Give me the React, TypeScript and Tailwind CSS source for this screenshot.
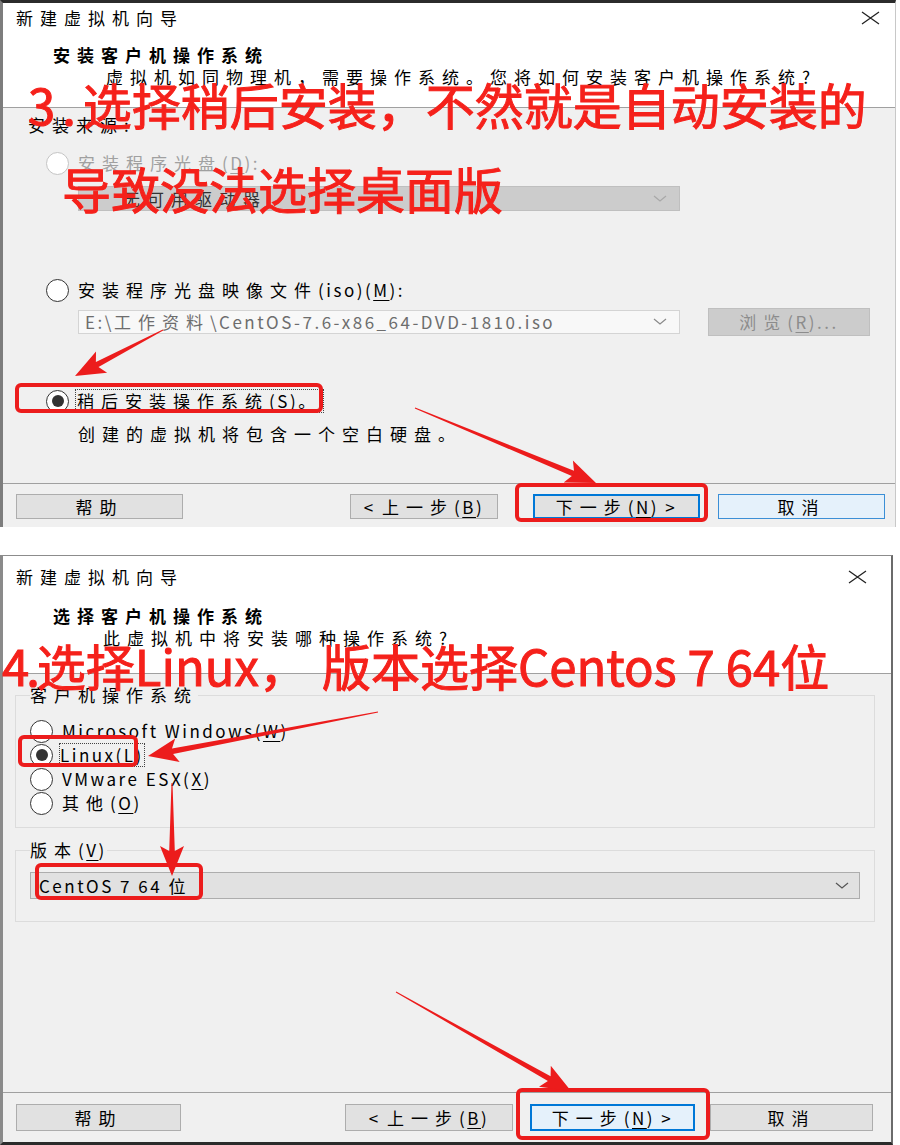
import React from "react";

// CJK runs get wide tracking, latin runs a little, so the stretched screenshot widths line up
const CJK = /([\u2e80-\u9fff\u3000-\u303f\uff00-\uffef]+)/;

function Runs({ s }: { s: string }) {
  return (
    <>
      {s
        .split(CJK)
        .filter(Boolean)
        .map((r, i) =>
          CJK.test(r) ? (
            <span key={i} className="tracking-[7px]">
              {r}
            </span>
          ) : (
            <span key={i} className="tracking-[2.5px]">
              {r}
            </span>
          )
        )}
    </>
  );
}

// "&X" marks an underlined mnemonic letter
function T({ s, className = "" }: { s: string; className?: string }) {
  return (
    <span className={`whitespace-nowrap ${className}`}>
      {s
        .split(/(&.)/)
        .filter(Boolean)
        .map((p, i) =>
          p.length === 2 && p[0] === "&" ? (
            <u key={i} className="tracking-[2.5px] underline-offset-[3px]">
              {p[1]}
            </u>
          ) : (
            <Runs key={i} s={p} />
          )
        )}
    </span>
  );
}

function Radio({ on = false, off = false }: { on?: boolean; off?: boolean }) {
  return (
    <span
      className={`flex h-[23px] w-[23px] shrink-0 items-center justify-center rounded-full border-[1.5px] bg-white ${
        off ? "border-[#c4c4c4]" : "border-[#333333]"
      }`}
    >
      {on && <span className="h-[12px] w-[12px] rounded-full bg-[#333333]" />}
    </span>
  );
}

function Chevron({ color = "#8a8a8a" }: { color?: string }) {
  return (
    <svg width="14" height="8" viewBox="0 0 14 8">
      <polyline points="1,1 7,6 13,1" fill="none" stroke={color} strokeWidth="1.2" />
    </svg>
  );
}

function CloseX() {
  return (
    <svg width="19" height="14" viewBox="0 0 19 14">
      <path d="M1 1L18 13M18 1L1 13" stroke="#222" strokeWidth="1.3" fill="none" />
    </svg>
  );
}

function Btn({ s, className }: { s: string; className: string }) {
  return (
    <div className={`flex shrink-0 items-center justify-center ${className}`}>
      <T s={s} />
    </div>
  );
}

function arrow(x1: number, y1: number, x2: number, y2: number) {
  const dx = x2 - x1;
  const dy = y2 - y1;
  const L = Math.hypot(dx, dy);
  const ux = dx / L;
  const uy = dy / L;
  const nx = -uy;
  const ny = ux;
  const hl = 30;
  const hw = 12;
  const sw = 2.8;
  const tw = 0.5;
  const bx = x2 - ux * hl;
  const by = y2 - uy * hl;
  const p = (x: number, y: number) => `${x.toFixed(1)},${y.toFixed(1)}`;
  return [
    p(x1 + nx * tw, y1 + ny * tw),
    p(bx + nx * sw + ux * 5, by + ny * sw + uy * 5),
    p(bx + nx * hw, by + ny * hw),
    p(x2, y2),
    p(bx - nx * hw, by - ny * hw),
    p(bx - nx * sw + ux * 5, by - ny * sw + uy * 5),
    p(x1 - nx * tw, y1 - ny * tw),
  ].join(" ");
}

const arrows = [
  [163, 330, 75, 376],
  [415, 408, 596, 483],
  [378, 712, 148, 756],
  [172, 783, 172, 876],
  [396, 992, 571, 1091],
];

const boxes = [
  [17, 385, 304, 26],
  [517, 485, 189, 35],
  [20, 737, 116, 28],
  [37, 865, 164, 33],
  [518, 1090, 190, 48],
];

export default function App() {
  return (
    <div className="relative h-[1145px] w-[900px] overflow-hidden bg-white font-['Noto_Sans_CJK_SC',sans-serif] text-[17px] text-black">
      {/* Dialog 1 */}
      <div className="flex h-[527px] w-[896px] flex-col border-t-[3px] border-r border-l-[3px] border-t-[#2b2b2b] border-r-[#c8c8c8] border-l-[#7d7d7d]">
        <div className="h-[105px] shrink-0 border-b border-[#a0a0a0] bg-white">
          <div className="flex items-center justify-between pt-[3px] pr-[15px] pl-[13px] leading-[24px]">
            <T s="新建虚拟机向导" />
            <CloseX />
          </div>
          <div className="mt-[14px] pl-[50px] leading-[22px] font-bold">
            <T s="安装客户机操作系统" />
          </div>
          <div className="pl-[103px] leading-[22px]">
            <T s="虚拟机如同物理机，需要操作系统。您将如何安装客户机操作系统?" />
          </div>
        </div>

        <div className="flex-1 bg-[#f0f0f0] pt-[6px] leading-[22px]">
          <div className="pl-[25px]">
            <T s="安装来源:" />
          </div>
          <div className="mt-[15px] flex h-[24px] items-center gap-[9px] pl-[43px] text-[#a0a0a0]">
            <Radio off />
            <T s="安装程序光盘(&D):" />
          </div>
          <div className="mt-[11px] ml-[75px] flex h-[25px] w-[602px] items-center justify-between border border-[#bfbfbf] bg-[#cccccc] pr-[12px] pl-[44px] text-[#333333]">
            <T s="无可用驱动器" />
            <Chevron color="#a8a8a8" />
          </div>
          <div className="mt-[67px] flex h-[24px] items-center gap-[9px] pl-[43px]">
            <Radio />
            <T s="安装程序光盘映像文件(iso)(&M):" />
          </div>
          <div className="mt-[6px] flex h-[28px] items-center">
            <div className="ml-[75px] flex h-[24px] w-[602px] items-center justify-between border border-[#d4d4d4] bg-[#f8f8f8] pr-[12px] pl-[6px] text-[#6d6d6d]">
              <T s="E:\工作资料\CentOS-7.6-x86_64-DVD-1810.iso" />
              <Chevron />
            </div>
            <Btn
              s="浏览(&R)..."
              className="ml-[28px] h-[28px] w-[162px] border border-[#bfbfbf] bg-[#cccccc] text-[#8c8c8c]"
            />
          </div>
          <div className="mt-[53px] flex h-[24px] items-center gap-[7px] pl-[43px]">
            <Radio on />
            <T s="稍后安装操作系统(&S)。" className="px-[1px] outline outline-dotted outline-[#444444]" />
          </div>
          <div className="mt-[10px] pl-[75px]">
            <T s="创建的虚拟机将包含一个空白硬盘。" />
          </div>
        </div>

        <div className="flex h-[44px] shrink-0 border-t border-[#a0a0a0] bg-[#f0f0f0] pt-[10px]">
          <Btn s="帮助" className="ml-[13px] h-[25px] w-[167px] border border-[#adadad] bg-[#e1e1e1]" />
          <Btn s="< 上一步(&B)" className="ml-[167px] h-[25px] w-[148px] border border-[#adadad] bg-[#e1e1e1]" />
          <Btn s="下一步(&N) >" className="ml-[35px] h-[25px] w-[167px] border-2 border-[#0078d7] bg-[#e1e1e1]" />
          <Btn s="取消" className="ml-[18px] h-[25px] w-[167px] border border-[#3c8fd6] bg-[#e5f1fb]" />
        </div>
      </div>

      {/* Dialog 2 */}
      <div className="mt-[28px] flex h-[590px] w-[893px] flex-col border-t border-r-2 border-b-[3px] border-l-[3px] border-t-[#8c8c8c] border-r-[#6b6b6b] border-b-[#2b2b2b] border-l-[#8a8a8a]">
        <div className="h-[118px] shrink-0 border-b border-[#a0a0a0] bg-white">
          <div className="flex items-center justify-between pt-[9px] pr-[24px] pl-[13px] leading-[24px]">
            <T s="新建虚拟机向导" />
            <CloseX />
          </div>
          <div className="mt-[16px] pl-[50px] leading-[22px] font-bold">
            <T s="选择客户机操作系统" />
          </div>
          <div className="pl-[100px] leading-[22px]">
            <T s="此虚拟机中将安装哪种操作系统?" />
          </div>
        </div>

        <div className="flex-1 bg-[#f0f0f0] leading-[22px]">
          <fieldset className="mt-[10px] ml-[12px] w-[860px] border border-[#dcdcdc] pt-[13px] pb-[12px] pl-[14px]">
            <legend className="leading-[22px]">
              <T s="客户机操作系统" />
            </legend>
            <div className="flex h-[24px] items-center gap-[9px]">
              <Radio />
              <T s="Microsoft Windows(&W)" />
            </div>
            <div className="flex h-[24px] items-center gap-[7px]">
              <Radio on />
              <T s="Linux(&L)" className="outline outline-dotted outline-[#444444]" />
            </div>
            <div className="flex h-[24px] items-center gap-[9px]">
              <Radio />
              <T s="VMware ESX(&X)" />
            </div>
            <div className="flex h-[24px] items-center gap-[9px]">
              <Radio />
              <T s="其他(&O)" />
            </div>
          </fieldset>

          <fieldset className="mt-[11px] ml-[12px] w-[860px] border border-[#dcdcdc] pt-[11px] pb-[22px] pl-[14px]">
            <legend className="leading-[22px]">
              <T s="版本(&V)" />
            </legend>
            <div className="flex h-[27px] w-[830px] items-center justify-between border border-[#adadad] bg-[#e1e1e1] pr-[10px] pl-[8px]">
              <T s="CentOS 7 64 位" />
              <Chevron color="#555555" />
            </div>
          </fieldset>
        </div>

        <div className="flex h-[50px] shrink-0 border-t border-[#a0a0a0] bg-[#f0f0f0] pt-[11px]">
          <Btn s="帮助" className="ml-[13px] h-[27px] w-[165px] border border-[#adadad] bg-[#e1e1e1]" />
          <Btn s="< 上一步(&B)" className="ml-[164px] h-[27px] w-[168px] border border-[#adadad] bg-[#e1e1e1]" />
          <Btn s="下一步(&N) >" className="ml-[17px] h-[27px] w-[165px] border-2 border-[#0078d7] bg-[#e5f1fb]" />
          <Btn s="取消" className="ml-[15px] h-[27px] w-[163px] border border-[#adadad] bg-[#e1e1e1]" />
        </div>
      </div>

      {/* red annotations */}
      <div className="absolute top-[79px] left-[28px] text-[49px] leading-none whitespace-nowrap text-[#f5211b] [-webkit-text-stroke:1px_#f5211b]">
        <span className="tracking-[7px]">3.</span>选择稍后安装，不然就是自动安装的
      </div>
      <div className="absolute top-[163px] left-[62px] text-[49px] leading-none whitespace-nowrap text-[#f5211b] [-webkit-text-stroke:1px_#f5211b]">
        导致没法选择桌面版
      </div>
      <div className="absolute top-[640px] left-[2px] text-[49px] leading-none whitespace-nowrap text-[#f5211b] [-webkit-text-stroke:1px_#f5211b]">
        <span className="tracking-[-3px]">4.</span>选择Linux<span className="tracking-[14px]">，</span>版本选择Centos 7 64位
      </div>

      <svg className="pointer-events-none absolute top-0 left-0" width={900} height={1145}>
        {boxes.map(([x, y, w, h], i) => (
          <rect key={i} x={x} y={y} width={w} height={h} rx={4} fill="none" stroke="#ec1c1c" strokeWidth={4} />
        ))}
        {arrows.map(([a, b, c, d], i) => (
          <polygon key={i} points={arrow(a, b, c, d)} fill="#ec1c1c" />
        ))}
      </svg>
    </div>
  );
}
